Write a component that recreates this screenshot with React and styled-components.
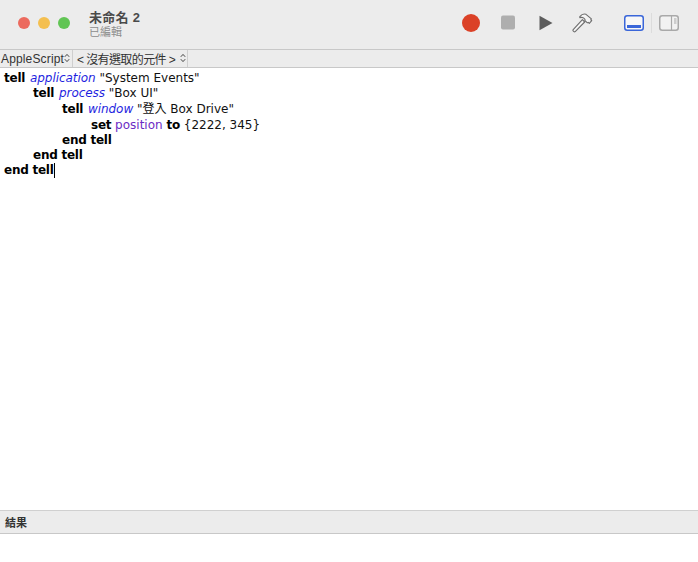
import React from 'react'
import styled, { createGlobalStyle } from 'styled-components'

const cjk = '"Noto Sans CJK TC", "Noto Sans CJK SC", sans-serif'

const GlobalStyle = createGlobalStyle`
  html, body {
    margin: 0;
    padding: 0;
    background: #fff;
  }
`

const Window = styled.div`
  width: 698px;
  height: 562px;
  display: flex;
  flex-direction: column;
  overflow: hidden;
  background: #fff;
  font-family: "Liberation Sans", ${cjk};
`

const TitleBar = styled.header`
  height: 50px;
  box-sizing: border-box;
  flex: none;
  display: flex;
  align-items: center;
  padding: 0 19px 4px 18px;
  background: #ececec;
  border-bottom: 1px solid #c8c8c8;
`

const Lights = styled.div`
  display: flex;
  gap: 8px;
  margin-right: 19px;
`

const Light = styled.span`
  width: 12px;
  height: 12px;
  border-radius: 50%;
  background: ${(p) => p.$color};
`

const TitleBlock = styled.div`
  display: flex;
  flex-direction: column;
  width: 373px;
  margin-top: 3px;
`

const Title = styled.div`
  font-size: 13px;
  line-height: 15px;
  font-weight: 700;
  letter-spacing: 0.3px;
  color: #4a4a4a;
`

const Subtitle = styled.div`
  font-size: 11px;
  line-height: 14px;
  color: #8c8c8c;
`

const Tools = styled.div`
  display: flex;
  align-items: center;
`

const Tool = styled.svg`
  display: block;
  flex: none;
  margin-left: ${(p) => p.$gap || 0}px;
`

const Divider = styled.span`
  width: 1px;
  height: 20px;
  margin: 0 7px 0 7px;
  background: #dcdcdc;
`

const JumpBar = styled.div`
  height: 18px;
  box-sizing: border-box;
  flex: none;
  display: flex;
  background: #ececec;
  border-bottom: 1px solid #c8c8c8;
`

const Picker = styled.div`
  display: flex;
  align-items: center;
  width: ${(p) => p.$width}px;
  padding-left: ${(p) => p.$pad}px;
  box-sizing: border-box;
  border-right: 1px solid #cfcfcf;
  font-size: 12px;
  letter-spacing: ${(p) => p.$spacing || 0}px;
  color: #333;
  white-space: pre;
`

const Stepper = styled.svg`
  position: absolute;
  top: 3px;
  right: ${(p) => p.$right}px;
`

const PickerWrap = styled.div`
  position: relative;
  display: flex;
`

const Editor = styled.pre`
  flex: 1;
  margin: 0;
  padding: 3px 0 0 4px;
  font-family: "DejaVu Sans", ${cjk};
  font-size: 12px;
  line-height: 15px;
  color: #111;
`

const Line = styled.div`
  height: ${(p) => (p.$tall ? 16 : 15)}px;
  padding-left: ${(p) => p.$level * 29}px;
  white-space: pre;
`

const Keyword = styled.b`
  font-weight: 700;
  letter-spacing: -0.25px;
  color: #000;
`

const Term = styled.i`
  margin-left: 1px;
  letter-spacing: -0.05px;
  color: #1f1fe0;
`

const Prop = styled.span`
  color: #6b2bc4;
`

const Caret = styled.span`
  display: inline-block;
  width: 1px;
  height: 15px;
  vertical-align: top;
  background: #000;
`

const ResultBar = styled.div`
  height: 24px;
  box-sizing: border-box;
  flex: none;
  display: flex;
  align-items: center;
  padding-left: 5px;
  background: #ececec;
  border-top: 1px solid #d0d0d0;
  border-bottom: 1px solid #c8c8c8;
  font-size: 11px;
  font-weight: 700;
  color: #333;
`

const ResultPane = styled.div`
  height: 28px;
  flex: none;
  background: #fff;
`

function StepperIcon({ right }) {
  return (
    <Stepper $right={right} width="6" height="10" viewBox="0 0 6 10" fill="none" stroke="#444" strokeWidth="1">
      <path d="M.8 3.8 3 1.4l2.2 2.4M.8 6.2 3 8.6l2.2-2.4" />
    </Stepper>
  )
}

function Toolbar() {
  return (
    <Tools>
      <Tool width="18" height="18" viewBox="0 0 18 18">
        <circle cx="9" cy="9" r="9" fill="#db4127" />
      </Tool>
      <Tool $gap="21" width="14" height="15" viewBox="0 0 14 15">
        <rect x="0" y="0.5" width="14" height="14" rx="2" fill="#aeaeae" />
      </Tool>
      <Tool $gap="24" width="14" height="16" viewBox="0 0 14 16">
        <path d="M0.5 0.8 13.5 8 0.5 15.2z" fill="#5d5d5d" />
      </Tool>
      <Tool $gap="19" width="21" height="20" viewBox="0 0 21 20" fill="#f4f4f4" stroke="#6e6e6e" strokeWidth="1.1" strokeLinejoin="round">
        <path d="M10.4 6.6 1.2 16.6a1 1 0 0 0 0 1.3l.7.7a1 1 0 0 0 1.3 0l9.5-9.6z" />
        <path d="M7.8 3.6C9.6 1.4 12 .5 14 1.3l5.4 4.6-.6.9.9.9-2.4 2.6-1-.9-.9.4-2.6-2.3.2-1.2-1.5-1.4c-1-.6-2.2-.6-3.7-.3z" />
      </Tool>
      <Tool $gap="31" width="20" height="16" viewBox="0 0 20 16">
        <rect x="0.75" y="0.75" width="18.5" height="14.5" rx="2.5" fill="#f7f7f7" stroke="#3a66d9" strokeWidth="1.5" />
        <rect x="3" y="10" width="14" height="3" fill="#3a66d9" />
      </Tool>
      <Divider />
      <Tool width="20" height="16" viewBox="0 0 20 16">
        <rect x="0.75" y="0.75" width="18.5" height="14.5" rx="2.5" fill="#f2f2f2" stroke="#a9a9a9" strokeWidth="1.5" />
        <path d="M12.5 1v14" stroke="#a9a9a9" strokeWidth="1.2" />
        <path d="M15 4h2.5M15 6h2.5M15 8h2.5" stroke="#a9a9a9" strokeWidth="1" />
      </Tool>
    </Tools>
  )
}

export default function App() {
  return (
    <Window>
      <GlobalStyle />
      <TitleBar>
        <Lights>
          <Light $color="#ec6a5e" />
          <Light $color="#f4bf4f" />
          <Light $color="#61c554" />
        </Lights>
        <TitleBlock>
          <Title>未命名 2</Title>
          <Subtitle>已編輯</Subtitle>
        </TitleBlock>
        <Toolbar />
      </TitleBar>
      <JumpBar>
        <PickerWrap>
          <Picker $width={73} $pad={1} $spacing={0.15}>AppleScript</Picker>
          <StepperIcon right={3} />
        </PickerWrap>
        <PickerWrap>
          <Picker $width={115} $pad={4} $spacing={-0.6}>&lt; 沒有選取的元件 &gt;</Picker>
          <StepperIcon right={2} />
        </PickerWrap>
      </JumpBar>
      <Editor>
        <Line $level={0}><Keyword>tell</Keyword> <Term>application</Term> "System Events"</Line>
        <Line $level={1} $tall><Keyword>tell</Keyword> <Term>process</Term> "Box UI"</Line>
        <Line $level={2} $tall><Keyword>tell</Keyword> <Term>window</Term> "登入 Box Drive"</Line>
        <Line $level={3}><Keyword>set</Keyword> <Prop>position</Prop> <Keyword>to</Keyword> {'{2222, 345}'}</Line>
        <Line $level={2}><Keyword>end tell</Keyword></Line>
        <Line $level={1}><Keyword>end tell</Keyword></Line>
        <Line $level={0}><Keyword>end tell</Keyword><Caret /></Line>
      </Editor>
      <ResultBar>結果</ResultBar>
      <ResultPane />
    </Window>
  )
}
